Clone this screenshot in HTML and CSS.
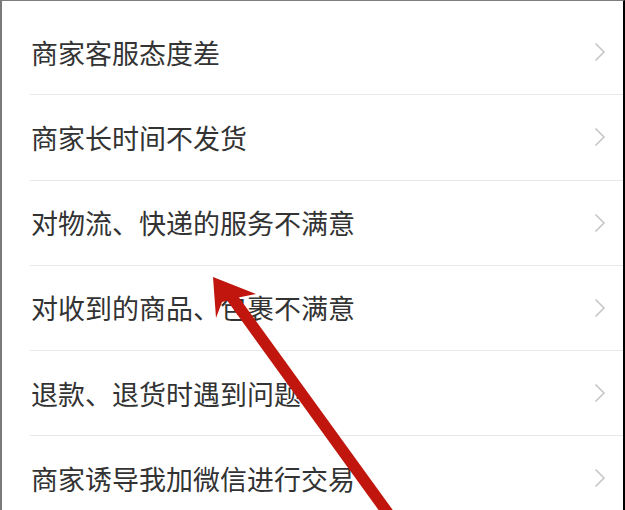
FILE: index.html
```html
<!DOCTYPE html>
<html lang="zh-CN">
<head>
<meta charset="utf-8">
<title>投诉原因</title>
<link rel="stylesheet" href="styles.css">
</head>
<body>
<div class="frame">
  <ul class="list">
    <li class="row"><span class="label">商家客服态度差</span><svg class="chev" viewBox="0 0 12 20"><path d="M1.5 1.5 L10 10 L1.5 18.5"/></svg></li>
    <li class="row"><span class="label">商家长时间不发货</span><svg class="chev" viewBox="0 0 12 20"><path d="M1.5 1.5 L10 10 L1.5 18.5"/></svg></li>
    <li class="row"><span class="label">对物流、快递的服务不满意</span><svg class="chev" viewBox="0 0 12 20"><path d="M1.5 1.5 L10 10 L1.5 18.5"/></svg></li>
    <li class="row"><span class="label">对收到的商品、包裹不满意</span><svg class="chev" viewBox="0 0 12 20"><path d="M1.5 1.5 L10 10 L1.5 18.5"/></svg></li>
    <li class="row"><span class="label">退款、退货时遇到问题</span><svg class="chev" viewBox="0 0 12 20"><path d="M1.5 1.5 L10 10 L1.5 18.5"/></svg></li>
    <li class="row"><span class="label">商家诱导我加微信进行交易</span><svg class="chev" viewBox="0 0 12 20"><path d="M1.5 1.5 L10 10 L1.5 18.5"/></svg></li>
  </ul>
  <svg class="arrow" viewBox="0 0 625 510" width="625" height="510">
    <line x1="228" y1="292" x2="390" y2="516" stroke="#c0160e" stroke-width="11.5"/>
    <polygon points="213,277 256,294 236,298 222,302 216,318" fill="#c0160e"/>
  </svg>
</div>
</body>
</html>
```

FILE: styles.css
```css
html, body {
  margin: 0;
  padding: 0;
  background: #ffffff;
}

.frame {
  position: relative;
  width: 625px;
  height: 510px;
  box-sizing: border-box;
  border-top: 1px solid #7d7d7d;
  border-left: 2px solid #7a7a7a;
  border-right: 2px solid #000000;
  overflow: hidden;
  background: #ffffff;
}

.list {
  list-style: none;
  margin: 0;
  padding: 9px 0 0 28px;
}

.row {
  display: flex;
  align-items: center;
  justify-content: space-between;
  height: 84.25px;
  border-bottom: 1px solid #e8e8e8;
  padding-right: 17px;
}

.label {
  font-family: "Noto Sans CJK SC", "Noto Sans", sans-serif;
  font-size: 27px;
  color: #333333;
  padding-left: 1px;
  letter-spacing: 0;
}

.chev {
  width: 12px;
  height: 20px;
  fill: none;
  stroke: #c6c6c6;
  stroke-width: 1.6;
}

.arrow {
  position: absolute;
  left: -2px;
  top: -1px;
  pointer-events: none;
}
```
